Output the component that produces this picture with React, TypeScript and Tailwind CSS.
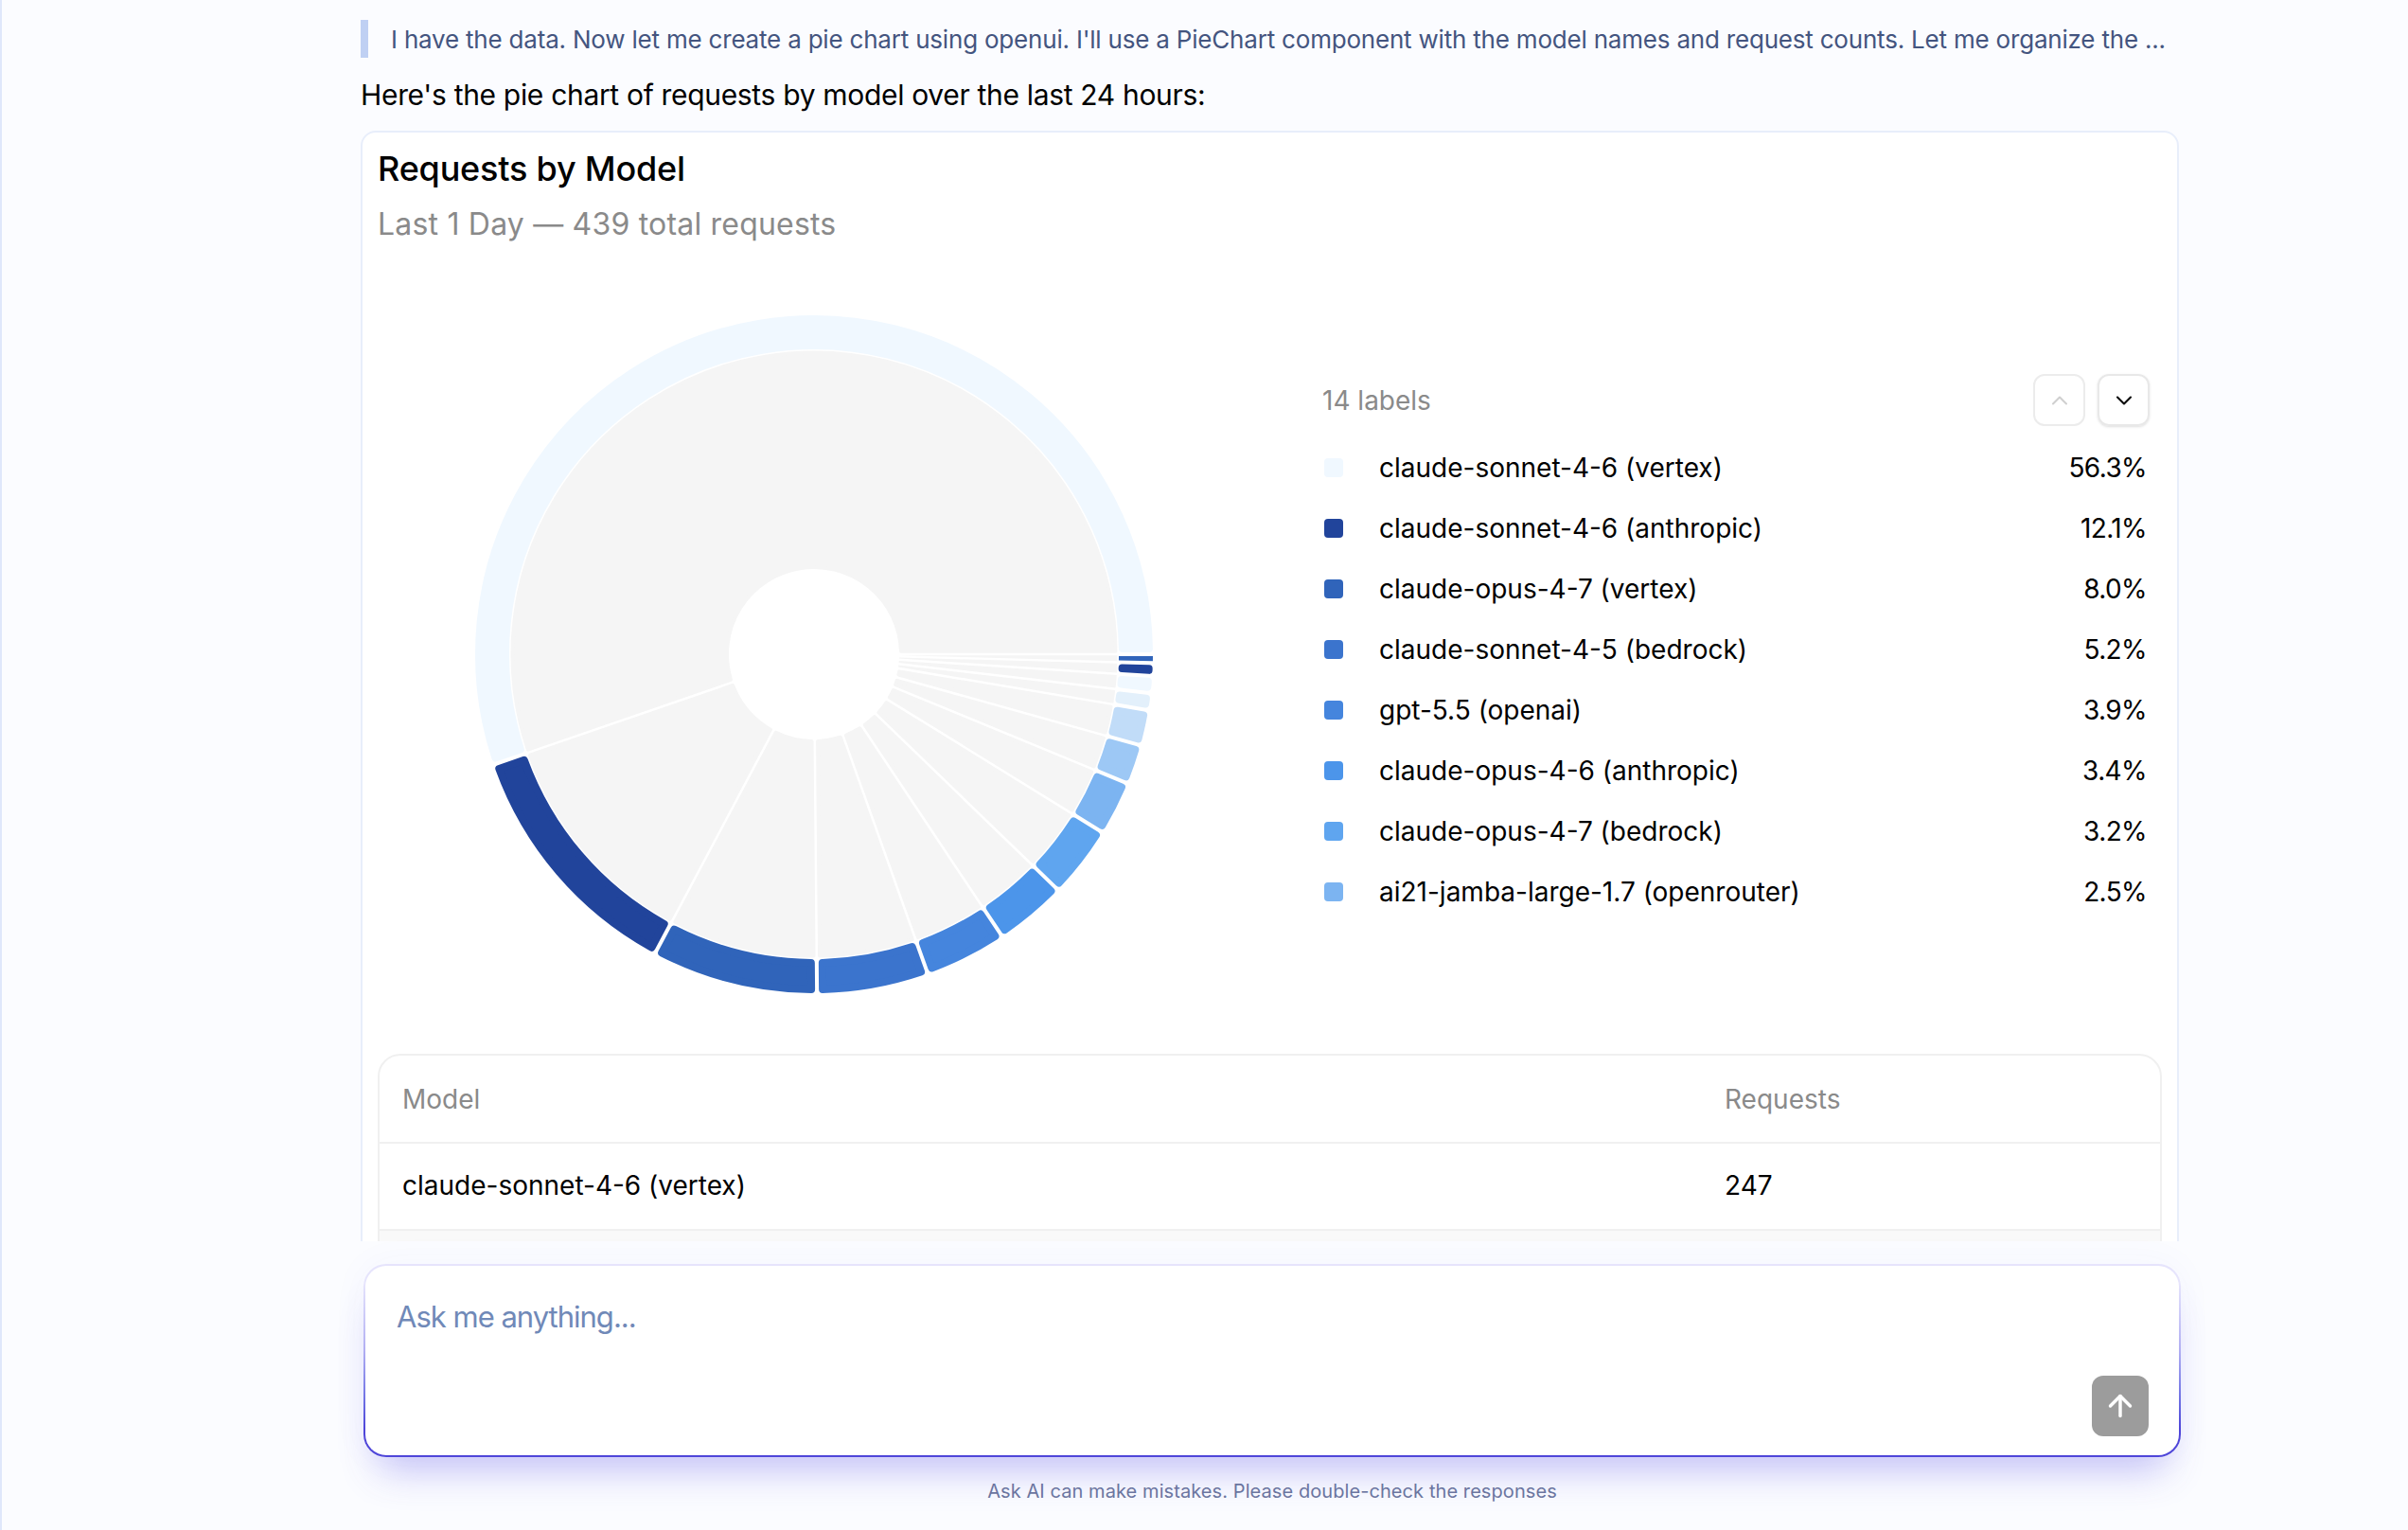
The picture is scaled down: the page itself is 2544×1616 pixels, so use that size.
import { ArrowUp, ChevronDown, ChevronUp } from 'lucide-react';

const CX = 360;
const CY = 360;

// angles are clockwise from 3 o'clock, measured off the screenshot
const slices = [
  { from: 161, to: 360, color: '#f0f8ff' },
  { from: 118, to: 161, color: '#21449b' },
  { from: 89.5, to: 118, color: '#3064ba' },
  { from: 70.4, to: 89.5, color: '#3b74cd' },
  { from: 56.3, to: 70.4, color: '#4585dd' },
  { from: 44, to: 56.3, color: '#4c95ea' },
  { from: 31.7, to: 44, color: '#5fa5ef' },
  { from: 22.4, to: 31.7, color: '#7cb4f1' },
  { from: 15.6, to: 22.4, color: '#9dc8f5' },
  { from: 9.5, to: 15.6, color: '#c1dcf8' },
  { from: 6.6, to: 9.5, color: '#e3f0fb' },
  { from: 3.7, to: 6.6, color: '#f0f8ff' },
  { from: 1.5, to: 3.7, color: '#21449b' },
  { from: 0, to: 1.5, color: '#3064ba' },
];

const legend = [
  { name: 'claude-sonnet-4-6 (vertex)', pct: '56.3%', color: '#f0f8ff' },
  { name: 'claude-sonnet-4-6 (anthropic)', pct: '12.1%', color: '#21449b' },
  { name: 'claude-opus-4-7 (vertex)', pct: '8.0%', color: '#3064ba' },
  { name: 'claude-sonnet-4-5 (bedrock)', pct: '5.2%', color: '#3b74cd' },
  { name: 'gpt-5.5 (openai)', pct: '3.9%', color: '#4585dd' },
  { name: 'claude-opus-4-6 (anthropic)', pct: '3.4%', color: '#4c95ea' },
  { name: 'claude-opus-4-7 (bedrock)', pct: '3.2%', color: '#5fa5ef' },
  { name: 'ai21-jamba-large-1.7 (openrouter)', pct: '2.5%', color: '#7cb4f1' },
];

function pt(r: number, deg: number) {
  const a = (deg * Math.PI) / 180;
  return `${(CX + r * Math.cos(a)).toFixed(2)} ${(CY + r * Math.sin(a)).toFixed(2)}`;
}

// annular sector with a constant-width gap between neighbours
function sector(r0: number, r1: number, from: number, to: number, gap: number) {
  const off = (r: number) => (Math.asin(Math.min(1, gap / 2 / r)) * 180) / Math.PI;
  let a0 = from + off(r0);
  let a1 = to - off(r0);
  if (a0 > a1) {
    a0 = a1 = (from + to) / 2;
  }
  const b0 = from + off(r1);
  const b1 = to - off(r1);
  const large = b1 - b0 > 180 ? 1 : 0;
  return `M${pt(r1, b0)}A${r1} ${r1} 0 ${large} 1 ${pt(r1, b1)}L${pt(r0, a1)}A${r0} ${r0} 0 ${large} 0 ${pt(r0, a0)}Z`;
}

function Pie() {
  return (
    <svg width="720" height="720" viewBox="0 0 720 720">
      {slices.map((s) => {
        const wide = s.to - s.from > 5;
        const c = wide ? 2 : 0;
        return (
          <path
            key={`g${s.from}`}
            d={sector(90 + c, 320.5 - c, s.from, s.to, 2.5 + 2 * c)}
            fill="#f5f5f5"
            stroke="#f5f5f5"
            strokeWidth={2 * c}
            strokeLinejoin="round"
          />
        );
      })}
      {slices.map((s) => {
        const len = ((s.to - s.from) * Math.PI * 322) / 180 - 4;
        const c = len < 6 ? 0 : Math.min(4, len / 2 - 0.5);
        return (
          <path
            key={`r${s.from}`}
            d={sector(322 + c, 358 - c, s.from, s.to, 4 + 2 * c)}
            fill={s.color}
            stroke={s.color}
            strokeWidth={2 * c}
            strokeLinejoin="round"
          />
        );
      })}
    </svg>
  );
}

export default function App() {
  return (
    <div className="h-[1616px] overflow-hidden bg-[#fbfcff] border-l-2 border-[#dfe7fb] font-['Inter',sans-serif] text-black">
      <div className="h-[1311px] overflow-hidden pl-[379px] pt-[21px]">
        <div className="w-[1921px]">
          <div className="h-[40px] flex items-center border-l-8 border-[#bfd0f3] pl-[24px] text-[26px] tracking-[-0.2px] text-[#44557f] whitespace-nowrap">
            I have the data. Now let me create a pie chart using openui. I'll use a PieChart component with the model names and request counts. Let me organize the ...
          </div>
          <p className="mt-[19px] h-[40px] leading-[40px] text-[30px] tracking-[-0.32px]">Here's the pie chart of requests by model over the last 24 hours:</p>

          <div className="mt-[18px] bg-white border-2 border-[#e8eefb] rounded-[16px] pl-[16px] pr-[16px] pt-[14px]">
            <h2 className="h-[48px] leading-[48px] text-[36px] font-medium tracking-[-0.2px]">Requests by Model</h2>
            <div className="mt-[15px] h-[40px] leading-[40px] text-[32px] tracking-[0.2px] text-[#8a8a8a]">Last 1 Day — 439 total requests</div>

            <div className="mt-[74px] flex h-[720px]">
              <div className="w-[921px] flex justify-center">
                <Pie />
              </div>
              <div className="ml-[77px] w-[874px] pt-[64px]">
                <div className="flex items-center justify-between">
                  <span className="text-[28px] text-[#8a8a8a]">14 labels</span>
                  <div className="flex gap-[13px]">
                    <button className="w-[55px] h-[55px] flex items-center justify-center rounded-[12px] border-2 border-[#ececec] text-[#cfcfcf]">
                      <ChevronUp size={28} strokeWidth={1.75} />
                    </button>
                    <button className="w-[55px] h-[55px] flex items-center justify-center rounded-[12px] border-2 border-[#e8e8e8] shadow-sm text-black">
                      <ChevronDown size={28} strokeWidth={1.75} />
                    </button>
                  </div>
                </div>
                <div className="mt-[12px]">
                  {legend.map((l) => (
                    <div key={l.name} className="h-[64px] flex items-center text-[28px] pl-[2px] pr-[3px]">
                      <span className="w-[20px] h-[20px] rounded-[4px] mr-[38px]" style={{ background: l.color }} />
                      <span className="flex-1">{l.name}</span>
                      <span className="tracking-[-0.6px]">{l.pct}</span>
                    </div>
                  ))}
                </div>
              </div>
            </div>

            <div className="mt-[62px] border-2 border-[#f0f0f0] rounded-[24px] overflow-hidden text-[28px]">
              <div className="h-[91px] flex items-center px-[24px] text-[#8a8a8a]">
                <span className="w-[1397px]">Model</span>
                <span>Requests</span>
              </div>
              <div className="h-[92px] flex items-center px-[24px] border-t-2 border-[#f0f0f0]">
                <span className="w-[1397px] -translate-y-px">claude-sonnet-4-6 (vertex)</span>
                <span className="-translate-y-px">247</span>
              </div>
              <div className="h-[92px] bg-[#f9f9f9] border-t-2 border-[#f0f0f0]" />
            </div>
          </div>
        </div>
      </div>

      <div className="pl-[382px] pt-[24px]">
        <div className="w-[1920px] h-[204px] rounded-[24px] p-[2px] bg-gradient-to-b from-[#e6e4fc] from-10% via-[#b1aef2] via-45% to-[#4f46d9] to-85% shadow-[0_0_40px_rgba(79,70,229,0.04),0_30px_40px_-16px_rgba(79,70,229,0.3)]">
          <div className="h-full rounded-[22px] bg-white pl-[33px] pr-[32px] pt-[34px] pb-[20px] flex flex-col justify-between">
            <div className="h-[40px] leading-[40px] text-[31px] tracking-[-1px] text-[#7089b8]">Ask me anything...</div>
            <div className="flex justify-end">
              <button className="w-[60px] h-[64px] rounded-[12px] bg-[#9c9c9c] text-white flex items-center justify-center">
                <ArrowUp size={36} strokeWidth={2.3} />
              </button>
            </div>
          </div>
        </div>
        <p className="w-[1920px] mt-[23px] text-center text-[20px] tracking-[0.08px] leading-[26px] text-[#6b75a0]">Ask AI can make mistakes. Please double-check the responses</p>
      </div>
    </div>
  );
}
